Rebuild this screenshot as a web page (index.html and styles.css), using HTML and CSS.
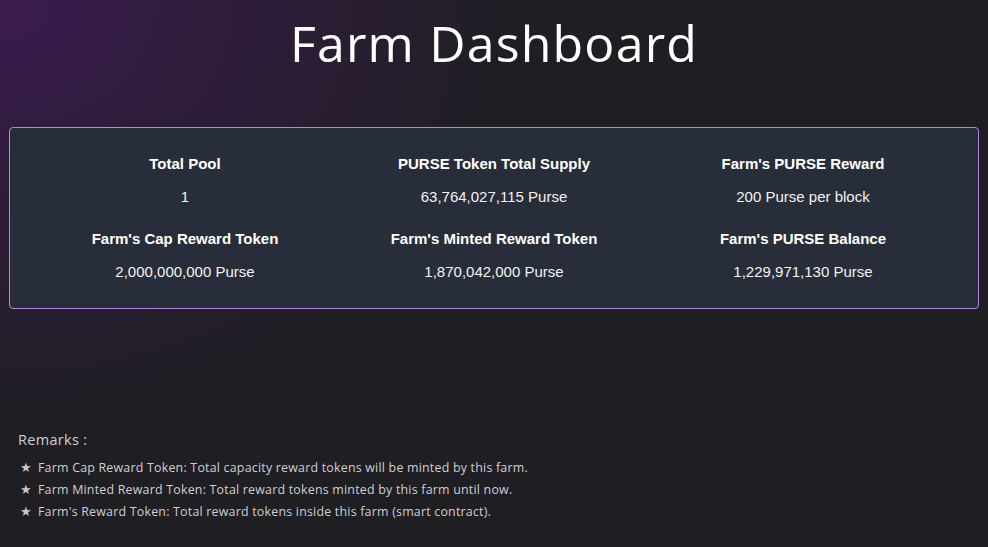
FILE: index.html
```html
<!DOCTYPE html>
<html>
<head>
<meta charset="utf-8">
<link rel="stylesheet" href="styles.css">
</head>
<body>
<div class="page">
  <h1 class="title">Farm Dashboard</h1>
  <div class="card">
    <div class="stat"><div class="label">Total Pool</div><div class="value">1</div></div>
    <div class="stat"><div class="label">PURSE Token Total Supply</div><div class="value">63,764,027,115 Purse</div></div>
    <div class="stat"><div class="label">Farm's PURSE Reward</div><div class="value">200 Purse per block</div></div>
    <div class="stat"><div class="label">Farm's Cap Reward Token</div><div class="value">2,000,000,000 Purse</div></div>
    <div class="stat"><div class="label">Farm's Minted Reward Token</div><div class="value">1,870,042,000 Purse</div></div>
    <div class="stat"><div class="label">Farm's PURSE Balance</div><div class="value">1,229,971,130 Purse</div></div>
  </div>
  <div class="remarks">
    <div class="remarks-title">Remarks :</div>
    <ul class="remarks-list">
      <li><span class="star">★</span>Farm Cap Reward Token: Total capacity reward tokens will be minted by this farm.</li>
      <li><span class="star">★</span>Farm Minted Reward Token: Total reward tokens minted by this farm until now.</li>
      <li><span class="star">★</span>Farm's Reward Token: Total reward tokens inside this farm (smart contract).</li>
    </ul>
  </div>
</div>
</body>
</html>
```

FILE: styles.css
```css
html, body {
  margin: 0;
  padding: 0;
  height: 100%;
}
body {
  background-color: #1f1e23;
  background-image: radial-gradient(ellipse 520px 420px at 0px 0px, rgba(60, 28, 80, 0.95), rgba(31, 30, 35, 0) 100%);
  color: #fff;
  font-family: "Open Sans", "Liberation Sans", sans-serif;
  overflow: hidden;
}
.page {
  padding: 0 9px;
}
.title {
  margin: 0;
  padding-top: 12px;
  height: 115px;
  text-align: center;
  font-family: "Open Sans", sans-serif;
  font-weight: 400;
  font-size: 50px;
  line-height: 62px;
  letter-spacing: 1.2px;
  color: #ffffff;
}
.card {
  background: #282e39;
  border: 1px solid #b583e0;
  border-radius: 4px;
  display: grid;
  grid-template-columns: repeat(3, 309px);
  justify-content: center;
  row-gap: 22px;
  padding: 26px 0 26px;
  font-family: "Liberation Sans", Arial, sans-serif;
}
.stat {
  text-align: center;
}
.label {
  font-weight: 700;
  font-size: 15px;
  line-height: 20px;
  color: #ffffff;
}
.value {
  margin-top: 13px;
  font-size: 15px;
  line-height: 20px;
  color: #f2f2f2;
}
.remarks {
  margin-top: 121px;
  padding-left: 9px;
  color: #cfcfd2;
}
.remarks-title {
  font-size: 14.5px;
  line-height: 20px;
  letter-spacing: 0.3px;
}
.remarks-list {
  list-style: none;
  margin: 7px 0 0;
  padding: 0 0 0 2px;
  font-size: 12.4px;
  letter-spacing: 0.22px;
}
.remarks-list li {
  height: 22px;
  line-height: 22px;
}
.star {
  display: inline-block;
  width: 18px;
  font-size: 13px;
  line-height: 1;
  letter-spacing: 0;
  color: #c8c8cc;
}
```
